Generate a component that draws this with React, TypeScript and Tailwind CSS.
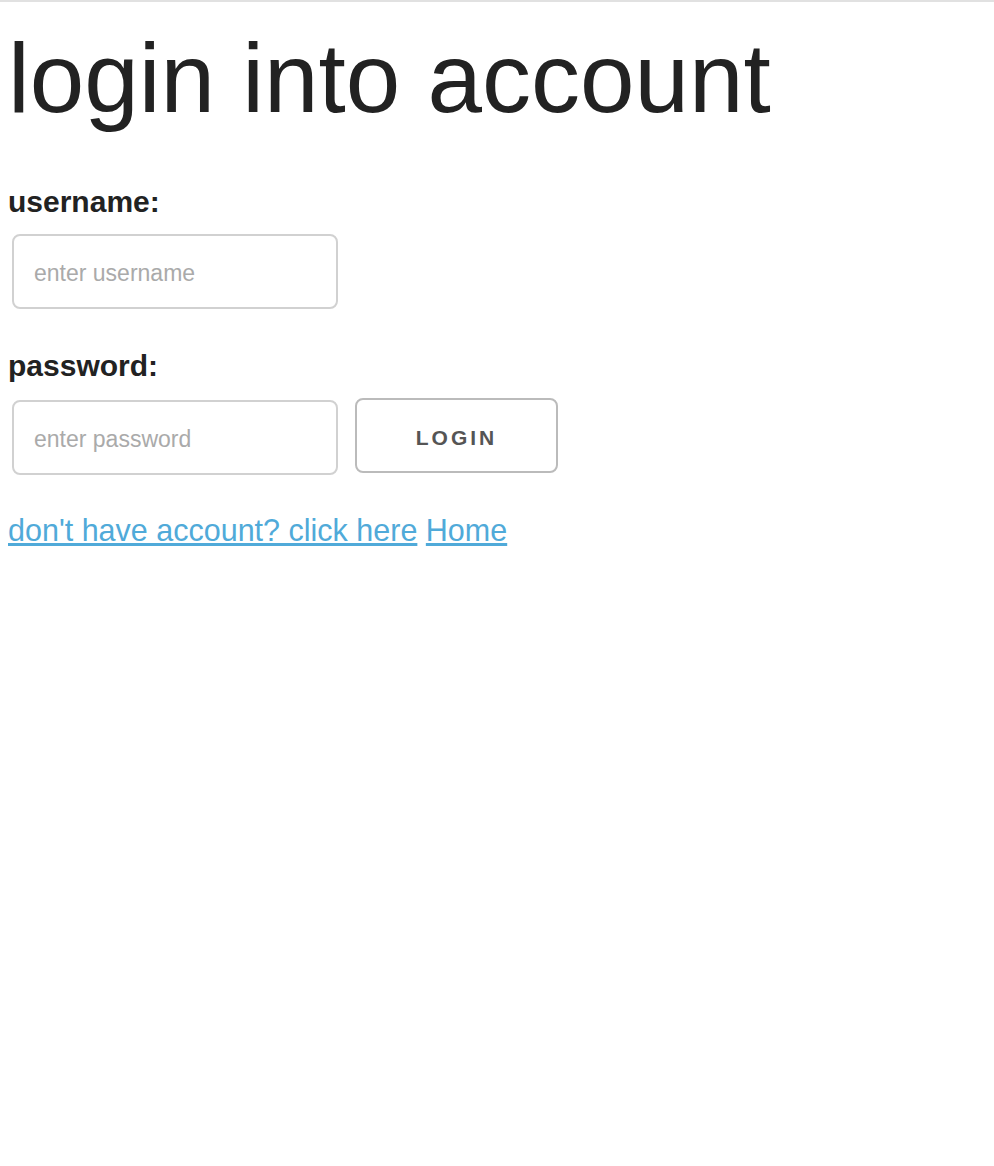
import React from 'react';

const App: React.FC = () => {
  return (
    <div className="min-h-screen bg-white border-t-2 border-[#e1e1e1] font-['Liberation_Sans',Arial,sans-serif] text-[#222]">
      <div className="px-2">
        <h1 className="text-[98px] leading-none font-normal mt-[27px] mb-[60px]">login into account</h1>

        <form className="flex flex-col">
          <label className="text-[30px] font-bold leading-none">username:</label>
          <div className="mt-[17px] ml-1">
            <input
              type="text"
              placeholder="enter username"
              className="w-[326px] h-[75px] border-2 border-[#d1d1d1] rounded-lg px-5 pt-1 text-[23px] placeholder:text-[#aaa] outline-none"
            />
          </div>

          <label className="text-[30px] font-bold leading-none mt-[42px]">password:</label>
          <div className="mt-[17px] ml-1 flex items-start gap-[17px]">
            <input
              type="password"
              placeholder="enter password"
              className="mt-[2px] w-[326px] h-[75px] border-2 border-[#d1d1d1] rounded-lg px-5 pt-1 text-[23px] placeholder:text-[#aaa] outline-none"
            />
            <button
              type="button"
              className="w-[203px] h-[75px] border-2 border-[#bbb] rounded-lg pt-1 text-[#555] text-[21px] font-bold tracking-[3px] uppercase"
            >
              Login
            </button>
          </div>
        </form>

        <div className="mt-[40px] text-[30.5px] leading-none">
          <a href="#" className="text-[#50aad9] underline">don't have account? click here</a>{' '}
          <a href="#" className="text-[#50aad9] underline">Home</a>
        </div>
      </div>
    </div>
  );
};

export default App;
